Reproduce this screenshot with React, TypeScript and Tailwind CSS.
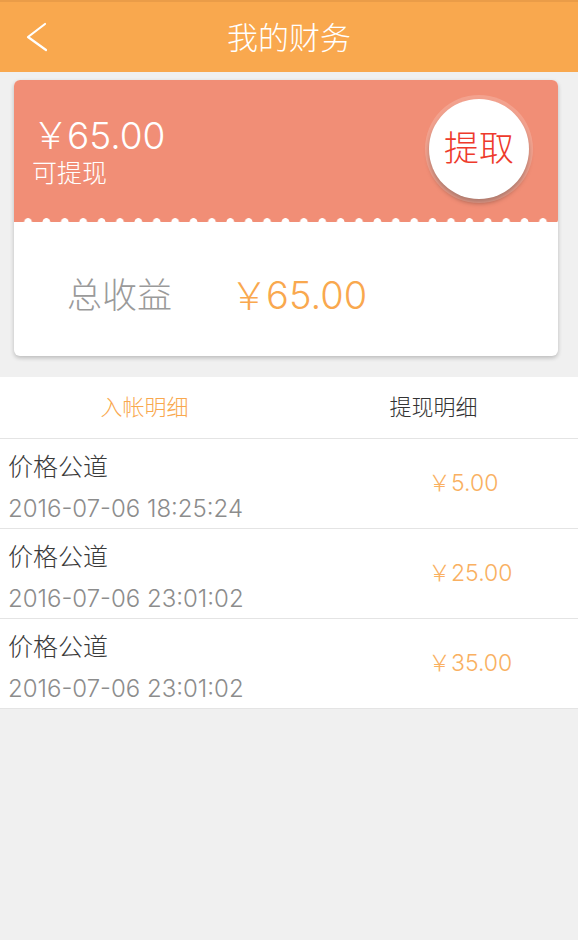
const rows = [
  { name: '价格公道', time: '2016-07-06 18:25:24', amount: '5.00' },
  { name: '价格公道', time: '2016-07-06 23:01:02', amount: '25.00' },
  { name: '价格公道', time: '2016-07-06 23:01:02', amount: '35.00' },
];

export default function App() {
  return (
    <div className="min-h-[940px] bg-[#f0f0f0] font-['Inter','Noto_Sans_CJK_SC',sans-serif] font-light">
      {/* header */}
      <header className="relative flex h-[72px] items-center justify-center border-t-2 border-[#ea9c48] bg-[#f9a84e]">
        <button className="absolute left-[26px] top-[20px] p-0">
          <svg width="22" height="30" viewBox="0 0 22 30" fill="none" stroke="white" strokeWidth="2.2" strokeLinecap="round" strokeLinejoin="round">
            <polyline points="19,2 2,15 20,28" />
          </svg>
        </button>
        <h1 className="text-[31px] leading-none text-white">我的财务</h1>
      </header>

      {/* balance card */}
      <div className="pt-[8px] pr-[20px] pb-[21px] pl-[14px]">
        <div className="overflow-hidden rounded-[6px] bg-white shadow-[0_2px_4px_rgba(0,0,0,0.22)]">
          <div className="flex h-[137px] items-center justify-between bg-[#f18e76] pl-[18px] pr-[29px]">
            <div className="pt-[4px] text-white">
              <div className="text-[37px] leading-[44px]">
                <span className="mr-[-2px]">￥</span>65.00
              </div>
              <div className="text-[25px] leading-[30px]">可提现</div>
            </div>
            <button className="flex h-[100px] w-[100px] items-center justify-center rounded-full bg-white text-[35px] text-[#ee3a2c] shadow-[0_0_0_4px_rgba(255,255,255,0.18),0_4px_5px_rgba(0,0,0,0.35)]">
              提取
            </button>
          </div>
          <div className="h-[5px] bg-[#f18e76] bg-[radial-gradient(circle_at_14px_5px,#ffffff_3.5px,#f18e76_4.2px)] bg-[length:18.4px_5px]" />
          <div className="flex h-[134px] items-center pt-[12px] pl-[53px]">
            <span className="text-[35px] text-[#9a9a9a]">总收益</span>
            <span className="ml-[58px] text-[38px] text-[#f9a84e]">
              <span className="mr-[-2px]">￥</span>65.00
            </span>
          </div>
        </div>
      </div>

      {/* tabs */}
      <div className="flex h-[62px] border-b border-[#e4e4e4] bg-white text-[22px]">
        <button className="flex flex-1 items-center justify-center text-[#f9a84e]">入帐明细</button>
        <button className="flex flex-1 items-center justify-center text-[#333]">提现明细</button>
      </div>

      {/* list */}
      <ul className="bg-white">
        {rows.map((r, i) => (
          <li key={i} className="flex h-[90px] items-center justify-between border-b border-[#e4e4e4] pl-[8px]">
            <div className="pt-[6px]">
              <div className="text-[25px] leading-[34px] text-[#3a3a3a]">{r.name}</div>
              <div className="mt-[10px] text-[24px] leading-[30px] text-[#8c8c8c]">{r.time}</div>
            </div>
            <div className="w-[150px] text-[23px] text-[#f9b061]">￥{r.amount}</div>
          </li>
        ))}
      </ul>
    </div>
  );
}
